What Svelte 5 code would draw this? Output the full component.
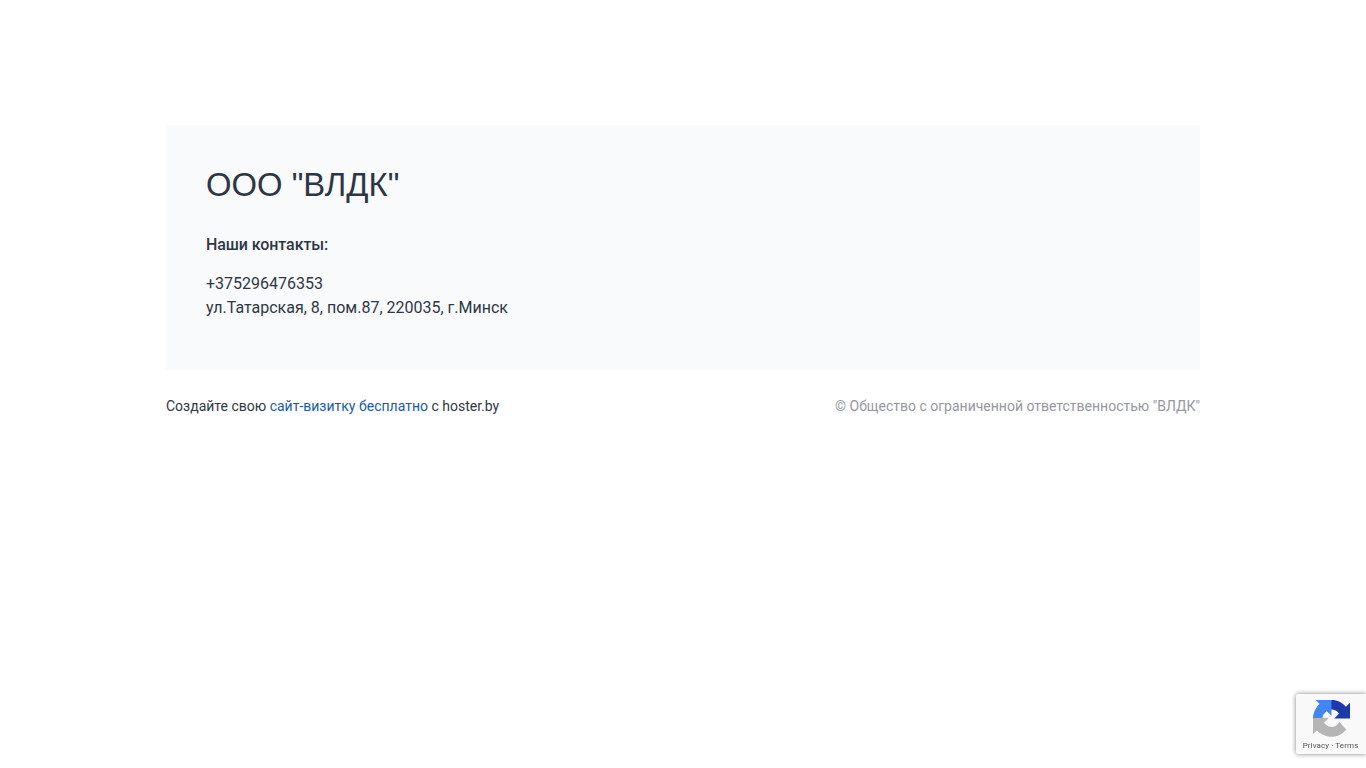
<script lang="ts">
let company = 'ООО "ВЛДК"';
</script>

<div class="page">
  <div class="container">
    <section class="jumbotron">
      <h1>{company}</h1>
      <p class="label"><strong>Наши контакты:</strong></p>
      <p class="contacts">+375296476353<br />ул.Татарская, 8, пом.87, 220035, г.Минск</p>
    </section>
    <footer class="footer">
      <div>Создайте свою <a href="#top">сайт-визитку</a> <a href="#top">бесплатно</a> с hoster.by</div>
      <div class="copy">© Общество с ограниченной ответственностью "ВЛДК"</div>
    </footer>
  </div>
</div>

<div class="badge">
  <svg class="logo" viewBox="0 0 64 64">
    <path fill="#1c3aa9" d="M64 31.955l-.033-1.37V4.687l-7.16 7.16C50.948 4.674 42.033.093 32.05.093c-10.4 0-19.622 4.96-25.458 12.64l11.736 11.86c1.15-2.127 2.784-3.955 4.76-5.338 2.05-1.6 4.952-2.908 8.962-2.908.484 0 .858.057 1.133.163 4.967.392 9.273 3.134 11.808 7.11l-8.307 8.307 26.314.03" />
    <path fill="#4285f4" d="M31.875.002l-1.37.033H4.687l7.16 7.16C4.674 13.053.093 21.968.093 31.95c0 10.4 4.96 19.622 12.64 25.458l11.86-11.736c-2.127-1.15-3.955-2.784-5.338-4.76-1.6-2.05-2.908-4.952-2.908-8.962 0-.484.057-.858.163-1.133.392-4.967 3.134-9.273 7.11-11.808l8.307 8.307.03-26.314" />
    <path fill="#b5b5b5" d="M.002 31.958l.033 1.37v25.82l7.16-7.16c5.858 7.172 14.774 11.753 24.757 11.753 10.4 0 19.622-4.96 25.458-12.64L45.674 38.243c-1.15 2.127-2.784 3.955-4.76 5.338-2.05 1.6-4.952 2.908-8.962 2.908-.484 0-.858-.057-1.133-.163-4.967-.392-9.273-3.134-11.808-7.11l8.307-8.307-26.314.03" />
  </svg>
  <div class="terms">Privacy · Terms</div>
</div>

<style>
:global(body) {
  margin: 0;
  background: #fff;
  font-family: Roboto, "Liberation Sans", sans-serif;
  color: #2f3744;
}
.page {
  padding-top: 125px;
}
.container {
  width: 1034px;
  margin: 0 auto;
}
.jumbotron {
  background: #f9fafb;
  padding: 40px;
  height: 245px;
  box-sizing: border-box;
  font-size: 16px;
  line-height: 24px;
}
h1 {
  margin: 0 0 28px;
  font-family: "Liberation Sans", Arial, sans-serif;
  font-size: 32.8px;
  font-weight: 400;
  line-height: 40px;
  color: #2c3645;
}
.label {
  margin: 0 0 15px;
}
.label strong {
  font-weight: 500;
  letter-spacing: -0.08px;
}
.contacts {
  margin: 0;
}
.footer {
  display: flex;
  justify-content: space-between;
  padding-top: 26px;
  font-size: 14px;
  line-height: 21px;
}
.footer a {
  color: #1a5aa8;
  text-decoration: none;
}
.copy {
  color: #96979f;
}
.badge {
  position: fixed;
  right: 0;
  bottom: 14px;
  width: 70px;
  height: 60px;
  background: #f9f9f9;
  box-shadow: 0 0 5px #808080;
  border-radius: 2px 0 0 2px;
  display: flex;
  flex-direction: column;
  align-items: center;
}
.logo {
  margin-top: 6px;
  width: 37px;
  height: 37px;
}
.terms {
  font-family: Roboto, "Liberation Sans", sans-serif;
  font-size: 8px;
  line-height: 10px;
  color: #555;
  white-space: nowrap;
  letter-spacing: 0.1px;
  margin-top: 4px;
  margin-left: -1px;
}
</style>
